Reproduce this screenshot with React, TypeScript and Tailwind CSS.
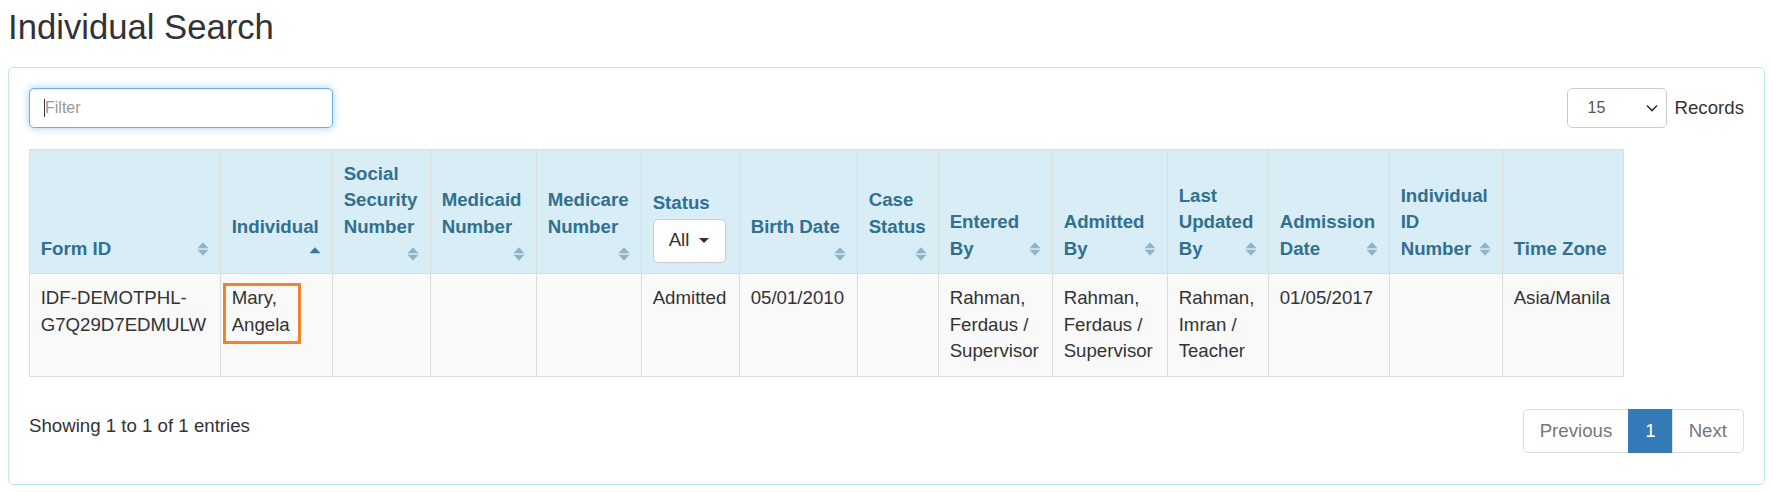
import React from 'react';

type Sort = 'both' | 'asc' | 'none';

type Column = {
  lines: string[];
  width: string;
  sort: Sort;
  iconBelow?: boolean;
  filter?: boolean;
};

// header columns, widths measured from the grid lines
const columns: Column[] = [
  { lines: ['Form ID'], width: 'w-[191px]', sort: 'both' },
  { lines: ['Individual'], width: 'w-[112px]', sort: 'asc', iconBelow: true },
  { lines: ['Social', 'Security', 'Number'], width: 'w-[98px]', sort: 'both', iconBelow: true },
  { lines: ['Medicaid', 'Number'], width: 'w-[106px]', sort: 'both', iconBelow: true },
  { lines: ['Medicare', 'Number'], width: 'w-[105px]', sort: 'both', iconBelow: true },
  { lines: ['Status'], width: 'w-[98px]', sort: 'none', filter: true },
  { lines: ['Birth Date'], width: 'w-[118px]', sort: 'both', iconBelow: true },
  { lines: ['Case', 'Status'], width: 'w-[81px]', sort: 'both', iconBelow: true },
  { lines: ['Entered', 'By'], width: 'w-[114px]', sort: 'both' },
  { lines: ['Admitted', 'By'], width: 'w-[115px]', sort: 'both' },
  { lines: ['Last', 'Updated', 'By'], width: 'w-[101px]', sort: 'both' },
  { lines: ['Admission', 'Date'], width: 'w-[121px]', sort: 'both' },
  { lines: ['Individual', 'ID', 'Number'], width: 'w-[113px]', sort: 'both' },
  { lines: ['Time Zone'], width: 'w-[121px]', sort: 'none' },
];

const row = [
  'IDF-DEMOTPHL-G7Q29D7EDMULW',
  'Mary, Angela',
  '',
  '',
  '',
  'Admitted',
  '05/01/2010',
  '',
  'Rahman, Ferdaus / Supervisor',
  'Rahman, Ferdaus / Supervisor',
  'Rahman, Imran / Teacher',
  '01/05/2017',
  '',
  'Asia/Manila',
];

function SortIcon({ dir }: { dir: Sort }) {
  return (
    <svg width="12" height="14" viewBox="0 0 12 14" className="shrink-0">
      <path
        d="M0.5 6.2 L6 0.3 L11.5 6.2 Z"
        className={dir === 'asc' ? 'fill-[#3a7799]' : 'fill-[#8fb4c8]'}
      />
      {dir === 'both' && <path d="M0.5 7.8 L6 13.7 L11.5 7.8 Z" className="fill-[#8fb4c8]" />}
    </svg>
  );
}

function HeaderCell({ col }: { col: Column }) {
  return (
    <th className={`${col.width} border border-[#ddd] bg-[#d9edf7] p-[10.67px] text-left align-bottom font-bold text-[#31708f]`}>
      <div className="flex flex-col justify-end">
        {col.lines.map((line, i) => {
          const last = i === col.lines.length - 1;
          return (
            <div key={line + i} className="flex h-[26.67px] items-center justify-between whitespace-nowrap">
              <span>{line}</span>
              {last && !col.iconBelow && col.sort !== 'none' && <SortIcon dir={col.sort} />}
            </div>
          );
        })}
        {col.iconBelow && (
          <div className="flex h-[22px] items-end justify-end pb-[2px]">
            <SortIcon dir={col.sort} />
          </div>
        )}
        {col.filter && (
          <button className="mt-[2px] flex h-[44px] w-[73px] items-center gap-[10px] rounded-[5px] border border-[#ccc] bg-white px-[15px] font-normal text-[#333]">
            All
            <span className="h-0 w-0 border-x-[5px] border-t-[5px] border-x-transparent border-t-[#333]" />
          </button>
        )}
      </div>
    </th>
  );
}

export default function App() {
  return (
    <div className="min-h-screen bg-white px-2 pt-2 font-['Liberation_Sans',Arial,sans-serif] text-[18.67px] leading-[26.67px] text-[#333]">
      <h1 className="mb-[21px] text-[34.67px] leading-[38px] font-normal">Individual Search</h1>

      <div className="rounded-[5px] border border-[#bce8f1] p-5">
        {/* filter + records */}
        <div className="mb-[21px] flex items-center justify-between">
          <div className="relative">
            <input
              placeholder="Filter"
              className="h-10 w-[304px] rounded-[5px] border border-[#66afe9] px-[15px] text-[16px] text-[#555] shadow-[inset_0_1px_1px_rgba(0,0,0,0.075),0_0_8px_rgba(102,175,233,0.6)] outline-none placeholder:text-[#999]"
            />
            <span className="absolute top-[11px] left-[15px] h-[18px] w-px bg-[#333]" />
          </div>
          <div className="flex items-center gap-2">
            <div className="relative">
              <select className="h-10 w-[100px] appearance-none rounded-[5px] border border-[#ccc] bg-white pl-[20px] text-[16px] text-[#555] outline-none">
                <option>15</option>
                <option>25</option>
                <option>50</option>
              </select>
              <svg width="12" height="8" viewBox="0 0 12 8" className="pointer-events-none absolute top-[16px] right-[9px]">
                <path d="M1 1.5 L6 6.5 L11 1.5" className="fill-none stroke-[#333] stroke-[1.6]" />
              </svg>
            </div>
            <span>Records</span>
          </div>
        </div>

        {/* table */}
        <table className="w-[1594px] table-fixed border-collapse">
          <thead>
            <tr>
              {columns.map((col, i) => (
                <HeaderCell key={i} col={col} />
              ))}
            </tr>
          </thead>
          <tbody>
            <tr className="bg-[#f9f9f9]">
              {row.map((val, i) => (
                <td key={i} className="border border-[#ddd] p-[10.67px] align-top">
                  {i === 1 ? (
                    <div className="relative">
                      Mary,
                      <br />
                      Angela
                      <span className="absolute top-[-2px] left-[-9px] h-[61px] w-[78px] border-[3px] border-[#f0842c]" />
                    </div>
                  ) : (
                    val
                  )}
                </td>
              ))}
            </tr>
          </tbody>
        </table>

        {/* footer */}
        <div className="mt-[32px] flex items-start justify-between">
          <div className="pt-[4.5px]">Showing 1 to 1 of 1 entries</div>
          <ul className="mb-[10.67px] flex">
            <li className="rounded-l-[5px] border border-[#ddd] bg-white px-4 py-2 text-[#777]">Previous</li>
            <li className="-ml-px border border-[#337ab7] bg-[#337ab7] px-4 py-2 text-white">1</li>
            <li className="-ml-px rounded-r-[5px] border border-[#ddd] bg-white px-4 py-2 text-[#777]">Next</li>
          </ul>
        </div>
      </div>
    </div>
  );
}
